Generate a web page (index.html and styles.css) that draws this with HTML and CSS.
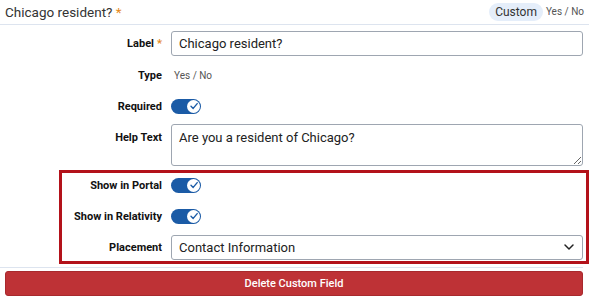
FILE: index.html
```html
<!DOCTYPE html>
<html>
<head>
<meta charset="utf-8">
<link rel="stylesheet" href="styles.css">
</head>
<body>
<div class="page">
  <header class="head">
    <div class="title">Chicago resident? <span class="star">*</span></div>
    <div class="meta"><span class="pill">Custom</span><span class="kind">Yes / No</span></div>
  </header>
  <div class="form">
    <label class="lbl">Label <span class="req">*</span></label>
    <div class="ctl"><input class="input" type="text" value="Chicago resident?"></div>

    <label class="lbl">Type</label>
    <div class="ctl"><span class="val">Yes / No</span></div>

    <label class="lbl">Required</label>
    <div class="ctl"><span class="toggle"><span class="knob"><svg width="10" height="10" viewBox="0 0 10 10"><polyline points="2,5.2 4.2,7.4 8.2,2.6" fill="none" stroke="#1b5ba6" stroke-width="1.4" stroke-linecap="round" stroke-linejoin="round"/></svg></span></span></div>

    <label class="lbl lbl-top">Help Text</label>
    <div class="ctl"><textarea class="area">Are you a resident of Chicago?</textarea></div>

    <label class="lbl">Show in Portal</label>
    <div class="ctl"><span class="toggle"><span class="knob"><svg width="10" height="10" viewBox="0 0 10 10"><polyline points="2,5.2 4.2,7.4 8.2,2.6" fill="none" stroke="#1b5ba6" stroke-width="1.4" stroke-linecap="round" stroke-linejoin="round"/></svg></span></span></div>

    <label class="lbl">Show in Relativity</label>
    <div class="ctl"><span class="toggle"><span class="knob"><svg width="10" height="10" viewBox="0 0 10 10"><polyline points="2,5.2 4.2,7.4 8.2,2.6" fill="none" stroke="#1b5ba6" stroke-width="1.4" stroke-linecap="round" stroke-linejoin="round"/></svg></span></span></div>

    <label class="lbl">Placement</label>
    <div class="ctl"><div class="select"><span>Contact Information</span><svg width="14" height="14" viewBox="0 0 14 14"><polyline points="3,5 7,9 11,5" fill="none" stroke="#222" stroke-width="1.5" stroke-linecap="round" stroke-linejoin="round"/></svg></div></div>
  </div>
  <div class="sep"></div>
  <div class="actions"><button class="danger">Delete Custom Field</button></div>
  <div class="highlight"></div>
</div>
</body>
</html>
```
FILE: styles.css
```css
* { box-sizing: border-box; }
html, body { margin: 0; padding: 0; background: #fff; }
body { font-family: Roboto, "Noto Sans", "Liberation Sans", sans-serif; color: #222; width: 589px; height: 301px; overflow: hidden; }
.page { position: relative; width: 589px; height: 301px; }
.head { height: 25px; display: flex; align-items: center; justify-content: space-between; padding: 0 5px 1px 5px; border-bottom: 1px solid #dde4ef; }
.title { font-size: 13.5px; color: #333; }
.star { color: #e68a1c; }
.meta { display: flex; align-items: center; gap: 3px; }
.pill { background: #e5eefa; border-radius: 9px; padding: 2px 6px; font-size: 12px; color: #333; line-height: 14px; }
.kind { font-size: 10px; color: #555; }
.form { display: grid; grid-template-columns: 162px 412px; column-gap: 9px; grid-template-rows: 25px 38px 24px 54px 26px 36px 26px; padding-top: 6px; }
.lbl { font-size: 11px; font-weight: 700; color: #111; text-align: right; display: flex; align-items: center; justify-content: flex-end; }
.lbl .req { color: #e68a1c; margin-left: 3px; font-weight: 700; }
.lbl-top { align-items: flex-start; padding-top: 13px; }
.ctl { display: flex; align-items: center; }
.input { width: 100%; height: 25px; border: 1px solid #9ea6b1; border-radius: 3px; padding: 0 7px; font: 13px Roboto, "Liberation Sans", sans-serif; color: #222; }
.val { font-size: 10px; color: #555; padding-left: 3px; }
.area { width: 100%; height: 42px; border: 1px solid #9ea6b1; border-radius: 3px; padding: 5px 7px; font: 13px Roboto, "Liberation Sans", sans-serif; color: #222; resize: vertical; }
.toggle { width: 30px; height: 15px; border-radius: 8px; background: #1b5ba6; display: inline-flex; align-items: center; justify-content: flex-end; padding-right: 1px; }
.knob { width: 13px; height: 13px; border-radius: 50%; background: #fff; display: flex; align-items: center; justify-content: center; }
.select { width: 100%; height: 25px; border: 1px solid #9ea6b1; border-radius: 3px; padding: 0 6px 0 7px; font-size: 13px; color: #222; display: flex; align-items: center; justify-content: space-between; }
.sep { margin-top: 7px; border-top: 1px solid #dde4ef; margin-right: 6px; }
.actions { padding: 3px 6px 0 5px; }
.danger { width: 100%; height: 25px; background: #be3236; border: 1px solid #a8292d; border-radius: 3px; color: #fff; font: 500 11px Roboto, "Liberation Sans", sans-serif; }
.highlight { position: absolute; left: 59px; top: 170px; width: 530px; height: 94px; border: 3px solid #b3121a; pointer-events: none; }
```
